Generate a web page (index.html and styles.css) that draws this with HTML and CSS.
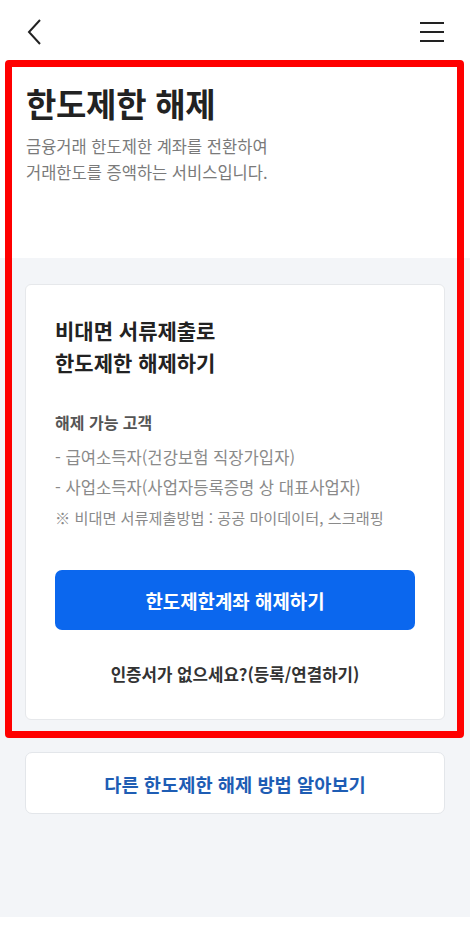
FILE: index.html
```html
<!DOCTYPE html>
<html lang="ko">

<head>
    <meta charset="UTF-8">
    <meta name="viewport" content="width=device-width, initial-scale=1.0">
    <title>한도제한 해제</title>
    <link rel="stylesheet" href="styles.css">
</head>

<body>
    <!-- 상단 바 -->
    <header class="topbar">
        <button class="icon-btn" aria-label="뒤로">
            <svg width="24" height="30" viewBox="0 0 24 30">
                <polyline points="17,3 6,15 17,27" fill="none" stroke="#222" stroke-width="2" />
            </svg>
        </button>
        <button class="icon-btn" aria-label="메뉴">
            <svg width="26" height="24" viewBox="0 0 26 24">
                <line x1="1" y1="3" x2="25" y2="3" stroke="#222" stroke-width="2" />
                <line x1="1" y1="12" x2="25" y2="12" stroke="#222" stroke-width="2" />
                <line x1="1" y1="21" x2="25" y2="21" stroke="#222" stroke-width="2" />
            </svg>
        </button>
    </header>

    <!-- 안내 -->
    <section class="intro">
        <h1>한도제한 해제</h1>
        <p>금융거래 한도제한 계좌를 전환하여<br>거래한도를 증액하는 서비스입니다.</p>
    </section>

    <main class="content">
        <div class="card">
            <h2>비대면 서류제출로<br>한도제한 해제하기</h2>
            <h3>해제 가능 고객</h3>
            <ul class="target-list">
                <li>- 급여소득자(건강보험 직장가입자)</li>
                <li>- 사업소득자(사업자등록증명 상 대표사업자)</li>
                <li class="note">※ 비대면 서류제출방법 : 공공 마이데이터, 스크래핑</li>
            </ul>
            <button class="btn-primary">한도제한계좌 해제하기</button>
            <a class="cert-link" href="#">인증서가 없으세요?(등록/연결하기)</a>
        </div>

        <a class="other-link" href="#">다른 한도제한 해제 방법 알아보기</a>
    </main>

    <div class="bottom-strip"></div>

    <!-- 강조 표시 -->
    <div class="highlight"></div>
</body>

</html>
```

FILE: styles.css
```css
* {
    box-sizing: border-box;
}

body,
h1,
h2,
h3,
p,
ul {
    margin: 0;
    padding: 0;
}

body {
    position: relative;
    width: 470px;
    min-height: 944px;
    background-color: #f3f5f8;
    font-family: "Noto Sans CJK KR", "Noto Sans", sans-serif;
    color: #222;
    display: flex;
    flex-direction: column;
}

/* 상단 바 */
.topbar {
    height: 64px;
    background-color: #fff;
    display: flex;
    align-items: center;
    justify-content: space-between;
    padding: 0 25px 0 23px;
}

.icon-btn {
    border: none;
    background: none;
    padding: 0;
    display: flex;
    cursor: pointer;
}

/* 안내 */
.intro {
    background-color: #fff;
    padding: 17px 26px 0;
    height: 194px;
}

.intro h1 {
    font-size: 33px;
    font-weight: 700;
    line-height: 44px;
    letter-spacing: -0.3px;
    color: #222;
}

.intro p {
    margin-top: 8px;
    font-size: 16.5px;
    line-height: 26px;
    color: #7a7a7a;
}

/* 본문 */
.content {
    flex: 1;
    padding: 26px 25px 0;
    display: flex;
    flex-direction: column;
    gap: 32px;
}

.card {
    background-color: #fff;
    border: 1px solid #e6e8eb;
    border-radius: 6px;
    padding: 29px 29px 34px;
    display: flex;
    flex-direction: column;
}

.card h2 {
    font-size: 21px;
    font-weight: 700;
    line-height: 32px;
    color: #222;
}

.card h3 {
    margin-top: 33px;
    font-size: 16px;
    font-weight: 700;
    line-height: 22px;
    color: #555;
}

.target-list {
    list-style: none;
    margin-top: 9px;
}

.target-list li {
    font-size: 16.6px;
    line-height: 30px;
    color: #8a8a8a;
}

.target-list .note {
    font-size: 15.2px;
}

.btn-primary {
    margin-top: 38px;
    height: 60px;
    border: none;
    border-radius: 7px;
    background-color: #0b67ee;
    color: #fff;
    font-family: inherit;
    font-size: 18.9px;
    font-weight: 700;
    cursor: pointer;
}

.cert-link {
    margin-top: 33px;
    text-align: center;
    font-size: 16.8px;
    font-weight: 700;
    line-height: 22px;
    color: #333;
    text-decoration: none;
}

.other-link {
    height: 62px;
    background-color: #fff;
    border: 1px solid #e3e6ea;
    border-radius: 7px;
    display: flex;
    align-items: center;
    justify-content: center;
    font-size: 18.7px;
    font-weight: 700;
    color: #1e5db4;
    text-decoration: none;
}

.bottom-strip {
    height: 27px;
    background-color: #fff;
}

/* 빨간 테두리 */
.highlight {
    position: absolute;
    left: 5px;
    top: 60px;
    width: 459px;
    height: 678px;
    border: 7px solid #f00;
    border-radius: 4px;
    pointer-events: none;
}
```
